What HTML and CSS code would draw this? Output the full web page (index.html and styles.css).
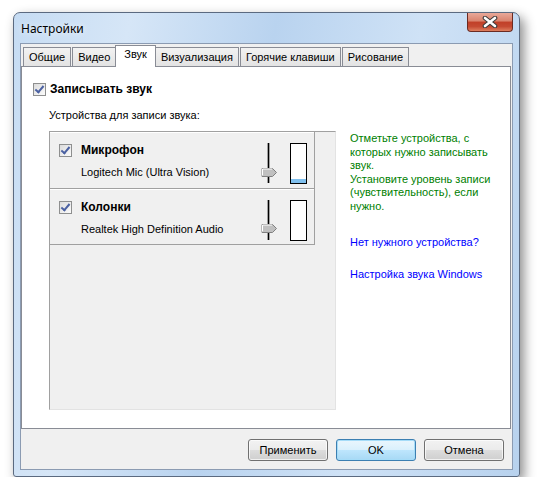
FILE: index.html
```html
<!DOCTYPE html>
<html>

<head lang="ru">
    <meta charset="UTF-8">
    <title>Настройки</title>
    <link rel="stylesheet" href="styles.css">
</head>

<body>
<div class="window">
    <!-- заголовок окна -->
    <div class="titlebar">
        <span class="title">Настройки</span>
        <a href="javascript:;" class="close">
            <svg width="16" height="12" viewBox="0 0 16 12">
                <path d="M3 2 L13 10 M13 2 L3 10" stroke="#3a3a3a" stroke-width="4.6" stroke-linecap="round"/>
                <path d="M3 2 L13 10 M13 2 L3 10" stroke="#fff" stroke-width="2.6" stroke-linecap="round"/>
            </svg>
        </a>
    </div>

    <div class="client">
        <!-- вкладки -->
        <ul class="tabs">
            <li>Общие</li>
            <li>Видео</li>
            <li class="active">Звук</li>
            <li>Визуализация</li>
            <li>Горячие клавиши</li>
            <li>Рисование</li>
        </ul>

        <div class="panel">
            <label class="check-row main-check">
                <span class="checkbox checked"></span>
                <b>Записывать звук</b>
            </label>
            <p class="caption">Устройства для записи звука:</p>

            <div class="row">
                <!-- список устройств -->
                <div class="devices">
                    <div class="device">
                        <span class="checkbox checked"></span>
                        <div class="device-text">
                            <b>Микрофон</b>
                            <span>Logitech Mic (Ultra Vision)</span>
                        </div>
                        <svg class="slider" width="17" height="41" viewBox="0 0 17 41">
                            <rect x="6" y="0" width="3" height="40" fill="#a0a0a0"/>
                            <rect x="7" y="0" width="1" height="40" fill="#000"/>
                            <path d="M1 25.5 H11.5 L15.5 29.5 L11.5 33.5 H1 Z" fill="#c0c0c0" stroke="#808080"/>
                            <path d="M1.5 32.5 V26 H11" fill="none" stroke="#fff"/>
                        </svg>
                        <div class="meter"><div class="level" style="height: 4px"></div></div>
                    </div>
                    <div class="device">
                        <span class="checkbox checked"></span>
                        <div class="device-text">
                            <b>Колонки</b>
                            <span>Realtek High Definition Audio</span>
                        </div>
                        <svg class="slider" width="17" height="41" viewBox="0 0 17 41">
                            <rect x="6" y="0" width="3" height="40" fill="#a0a0a0"/>
                            <rect x="7" y="0" width="1" height="40" fill="#000"/>
                            <path d="M1 24.5 H11.5 L15.5 28.5 L11.5 32.5 H1 Z" fill="#c0c0c0" stroke="#808080"/>
                            <path d="M1.5 31.5 V25 H11" fill="none" stroke="#fff"/>
                        </svg>
                        <div class="meter"></div>
                    </div>
                </div>

                <!-- подсказки справа -->
                <div class="hints">
                    <p class="hint">Отметьте устройства, с которых нужно записывать звук.<br>Установите уровень записи (чувствительность), если нужно.</p>
                    <a href="#" class="link">Нет нужного устройства?</a>
                    <a href="#" class="link">Настройка звука Windows</a>
                </div>
            </div>
        </div>

        <!-- кнопки -->
        <div class="buttons">
            <a href="javascript:;" class="btn">Применить</a>
            <a href="javascript:;" class="btn default">OK</a>
            <a href="javascript:;" class="btn">Отмена</a>
        </div>
    </div>
</div>
</body>

</html>
```

FILE: styles.css
```css
* {
    padding: 0;
    margin: 0;
    box-sizing: border-box;
}

ul {
    list-style: none;
}

a {
    text-decoration: none;
    color: inherit;
}

body {
    background-color: #fff;
    font-family: "Liberation Sans", Arial, sans-serif;
    font-size: 11px;
    color: #000;
}

.window {
    width: 507px;
    height: 465px;
    margin: 12px 0 0 13px;
    border: 1px solid #5b6a80;
    border-radius: 7px 7px 3px 3px;
    background: linear-gradient(100deg, #c6dcf3 0%, #d6e6f7 20%, #b9d3ef 45%, #cfe2f6 70%, #b8d2ee 100%);
    box-shadow: 4px 5px 12px rgba(0, 0, 0, .45);
    display: flex;
    flex-direction: column;
}

.titlebar {
    height: 30px;
    display: flex;
    align-items: flex-start;
    padding-left: 7px;
}

.title {
    margin-top: 7px;
    font-family: "Segoe UI", "Noto Sans", sans-serif;
    font-size: 12px;
    color: #000;
    text-shadow: 0 0 6px rgba(255, 255, 255, .9);
}

.close {
    margin-left: auto;
    margin-right: 6px;
    width: 46px;
    height: 19px;
    border: 1px solid #6b2b22;
    border-top: none;
    border-radius: 0 0 4px 4px;
    background: linear-gradient(#e9a899 0%, #d9836d 45%, #c13f28 50%, #c54a32 75%, #de7f5f 100%);
    display: flex;
    align-items: center;
    justify-content: center;
}

.client {
    flex: 1;
    margin: 0 6px 6px;
    border: 1px solid #8b9bb2;
    background-color: #f0f0f0;
    display: flex;
    flex-direction: column;
}

.tabs {
    display: flex;
    align-items: flex-end;
    height: 22px;
    padding-left: 2px;
    position: relative;
    z-index: 1;
}

.tabs li {
    height: 19px;
    padding: 0 5px;
    margin-right: 1px;
    line-height: 18px;
    border: 1px solid #898c95;
    border-bottom: none;
    background: linear-gradient(#f2f2f2, #e3e3e3);
}

.tabs li.active {
    height: 22px;
    padding: 0 8px;
    margin: 0 -1px -1px -2px;
    line-height: 16px;
    background: #fff;
}

.panel {
    flex: 1;
    margin: 0 1px 0 0;
    border: 1px solid #898c95;
    background-color: #fff;
    padding: 15px 0 0 11px;
}

.check-row {
    display: flex;
    align-items: center;
    gap: 4px;
}

.main-check b {
    font-size: 12px;
}

.checkbox {
    display: inline-block;
    width: 13px;
    height: 13px;
    border: 1px solid #8e8f8f;
    background: linear-gradient(135deg, #dcdcdc, #fbfbfb);
    position: relative;
    flex-shrink: 0;
}

.checkbox.checked::after {
    content: '';
    position: absolute;
    left: 3px;
    top: 0;
    width: 3px;
    height: 7px;
    border: solid #4b61a2;
    border-width: 0 2px 2px 0;
    transform: rotate(40deg);
}

.caption {
    margin: 13px 0 10px 16px;
}

.row {
    display: flex;
    gap: 14px;
    padding-left: 16px;
}

.devices {
    width: 287px;
    height: 279px;
    border: 1px solid;
    border-color: #a0a0a0 #e3e3e3 #e3e3e3 #a0a0a0;
    background-color: #f0f0f0;
}

.device {
    width: 265px;
    height: 57px;
    border-right: 1px solid #a0a0a0;
    border-bottom: 1px solid #a0a0a0;
    box-shadow: inset 0 1px 0 #fff;
    display: flex;
    align-items: flex-start;
    padding: 11px 0 0 9px;
}

.device + .device {
    height: 56px;
}

.device .checkbox {
    margin-top: 1px;
}

.device-text {
    flex: 1;
    display: flex;
    flex-direction: column;
    gap: 9px;
    padding-left: 9px;
}

.device-text b {
    font-size: 12px;
}

.meter {
    width: 17px;
    height: 41px;
    border: 1px solid #000;
    background-color: #fff;
    margin: 0 7px 0 12px;
    display: flex;
    flex-direction: column;
    justify-content: flex-end;
}

.level {
    background-color: #80c0ee;
}

.hints {
    display: flex;
    flex-direction: column;
    padding-top: 1px;
    width: 150px;
}

.hint {
    color: #008000;
    line-height: 13.5px;
}

.link {
    color: #0000ff;
    margin-top: 23px;
}

.link + .link {
    margin-top: 20px;
}

.buttons {
    height: 40px;
    display: flex;
    justify-content: flex-end;
    gap: 8px;
    padding: 10px 8px 0 0;
}

.btn {
    width: 80px;
    height: 22px;
    border: 1px solid #707070;
    border-radius: 3px;
    background: linear-gradient(#f2f2f2 0%, #ebebeb 50%, #dddddd 50%, #cfcfcf 100%);
    box-shadow: inset 0 0 0 1px rgba(255, 255, 255, .7);
    text-align: center;
    line-height: 20px;
}

.btn.default {
    border-color: #3c7fb1;
    background: linear-gradient(#eaf6fd 0%, #d9f0fc 50%, #bee6fd 50%, #a7d9f5 100%);
    box-shadow: inset 0 0 0 1px #a5dcf8;
}
```
